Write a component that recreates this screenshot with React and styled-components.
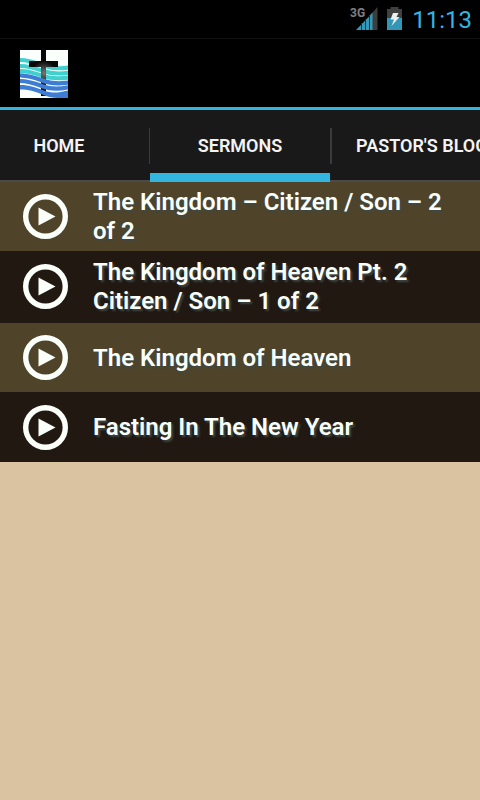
import React from "react";
import styled, { createGlobalStyle } from "styled-components";

const GlobalStyle = createGlobalStyle`
  *, *::before, *::after { box-sizing: border-box; }
  body {
    margin: 0;
    background: #dac3a1;
    color: #fafffa;
    font-family: Roboto, "Liberation Sans", sans-serif;
  }
`;

const Screen = styled.div`
  min-height: 100vh;
  overflow: hidden;
`;

const StatusBar = styled.div`
  display: flex;
  justify-content: flex-end;
  height: 39px;
  padding-right: 8px;
  background: #000;
  border-bottom: 1px solid #101010;
`;

const StatusIcons = styled.svg`
  display: block;
  width: 60px;
  height: 38px;
  margin-right: 5px;
`;

const Clock = styled.time`
  color: #33b5e5;
  font-size: 24px;
  line-height: 40px;
`;

const ActionBar = styled.header`
  display: flex;
  align-items: center;
  height: 71px;
  padding: 1px 20px 0;
  background: #000;
  border-bottom: 3px solid #33b5e0;
`;

const Logo = styled.svg`
  display: block;
  width: 48px;
  height: 48px;
`;

const Tabs = styled.nav`
  display: flex;
  height: 72px;
  overflow: hidden;
  background: #191919;
`;

const Tab = styled.a`
  display: flex;
  flex: none;
  align-items: center;
  justify-content: center;
  width: ${(p) => (p.$first ? "150px" : "auto")};
  min-width: ${(p) => (p.$first ? "0" : "180px")};
  padding: ${(p) => (p.$first ? "0 32px 0 0" : "0 26px")};
  border-bottom: ${(p) => (p.$active ? "9px solid #33b5e0" : "2px solid #4a4a4a")};
  padding-top: ${(p) => (p.$active ? "9px" : "2px")};
  color: #f3f3f3;
  font-size: 18px;
  font-weight: 600;
  line-height: 24px;
  white-space: nowrap;
  text-decoration: none;
  background: linear-gradient(#3b3b3b, #3b3b3b) no-repeat
    right 18px / ${(p) => (p.$first ? "1px" : "0")} 36px;
  ${(p) =>
    p.$last &&
    `background: linear-gradient(#3b3b3b, #3b3b3b) no-repeat left 18px / 2px 36px;`}
`;

const SermonList = styled.ul`
  margin: 0;
  padding: 0;
  list-style: none;
`;

const SermonItem = styled.li`
  background: ${(p) => (p.$dark ? "#211812" : "#4f4429")};
`;

const SermonButton = styled.button`
  display: flex;
  align-items: center;
  gap: 25px;
  width: 100%;
  min-height: ${(p) => p.$height}px;
  padding: 0 23px ${(p) => (p.$height > 70 ? 2 : 0)}px;
  border: 0;
  background: none;
  color: inherit;
  font: inherit;
  text-align: left;
  cursor: pointer;
`;

const PlayIcon = styled.svg`
  display: block;
  flex: none;
  width: 45px;
  height: 45px;
`;

const Title = styled.span`
  padding-top: 1px;
  font-size: 24px;
  font-weight: 600;
  line-height: 29px;
  text-shadow: 2px 2px 2px #3e4846;
`;

const tabs = ["HOME", "SERMONS", "PASTOR'S BLOG"];

const sermons = [
  { title: "The Kingdom – Citizen / Son – 2 of 2", height: 69 },
  { title: "The Kingdom of Heaven Pt. 2 Citizen / Son – 1 of 2", height: 72 },
  { title: "The Kingdom of Heaven", height: 69 },
  { title: "Fasting In The New Year", height: 70 },
];

function Status() {
  return (
    <StatusIcons viewBox="0 0 60 38" role="img" aria-label="3G signal, battery charging">
      <text x="3" y="17" fill="#808080" fontSize="12" fontWeight="700" fontFamily="Roboto, sans-serif">3G</text>
      <path d="M9 30L23 15.500V30Z" fill="#3399b8" />
      <path d="M23 15.500L30.500 7V30H23Z" fill="#3d3d3d" />
      <path d="M22 16.500L25.500 12.500V30H22Z" fill="#3399b8" />
      <path d="M14.500 23V30M18.500 19V30M22.500 15V30" stroke="#0b3442" strokeWidth="1" />
      <path d="M43.500 7H51.500V9H55V30H40V9H43.500Z" fill="#404040" />
      <path d="M40 18H55V30H40Z" fill="#3297b7" />
      <path d="M46 13H51.500L49.500 17H52.500L44.500 26L47 19.500H43.500Z" fill="#eee" />
    </StatusIcons>
  );
}

function ChurchLogo() {
  return (
    <Logo viewBox="0 0 48 48" role="img" aria-label="Church logo">
      <defs>
        <radialGradient id="glow" gradientUnits="userSpaceOnUse" cx="24" cy="23" r="12">
          <stop offset="0" stopColor="#777" />
          <stop offset="1" stopColor="#080808" />
        </radialGradient>
      </defs>
      <rect width="48" height="48" fill="#fafffc" />
      <g fill="none" stroke="#40d1cf" strokeWidth="4">
        <path d="M-1 10C10 10 16 13 23 15.500S38 19 49 17.500" />
        <path d="M-1 16C10 16 16 18.500 23 21S38 24.500 49 22.700" />
        <path d="M-1 21C10 21 16 23.500 23 26S38 29 49 27.500" />
      </g>
      <path d="M21 0H26V11H38V17H26V46H21V17H9V11H21Z" fill="url(#glow)" />
      <g fill="none" stroke="#3d7dd3" strokeWidth="4.200">
        <path d="M-1 25.300C10 25.300 16 28 23 30.800S38 34.300 49 32.500" />
        <path d="M-1 31C10 31 16 34 23 36.500S38 39.500 49 37.200" />
      </g>
      <path d="M0 35C10 35 16 37.500 24 40.500S38 43 48 40.500V48H38C32 48 27 46.500 21 44S9 39.500 0 39.500Z" fill="#3d7dd3" />
    </Logo>
  );
}

function Play() {
  return (
    <PlayIcon viewBox="0 0 45 45" aria-hidden="true">
      <circle cx="22.500" cy="22.500" r="19.800" fill="none" stroke="#fafffa" strokeWidth="5.400" />
      <path d="M15.500 13.500L32.500 22.500L15.500 31.500Z" fill="#fafffa" />
    </PlayIcon>
  );
}

export default function App() {
  return (
    <Screen>
      <GlobalStyle />
      <StatusBar>
        <Status />
        <Clock>11:13</Clock>
      </StatusBar>
      <ActionBar>
        <ChurchLogo />
      </ActionBar>
      <Tabs aria-label="Sections">
        {tabs.map((label, i) => (
          <Tab
            key={label}
            href="#"
            $first={i === 0}
            $active={i === 1}
            $last={i === tabs.length - 1}
            aria-current={i === 1 ? "page" : undefined}
          >
            {label}
          </Tab>
        ))}
      </Tabs>
      <main>
        <SermonList>
          {sermons.map(({ title, height }, i) => (
            <SermonItem key={title} $dark={i % 2 === 1}>
              <SermonButton type="button" $height={height}>
                <Play />
                <Title>{title}</Title>
              </SermonButton>
            </SermonItem>
          ))}
        </SermonList>
      </main>
    </Screen>
  );
}
